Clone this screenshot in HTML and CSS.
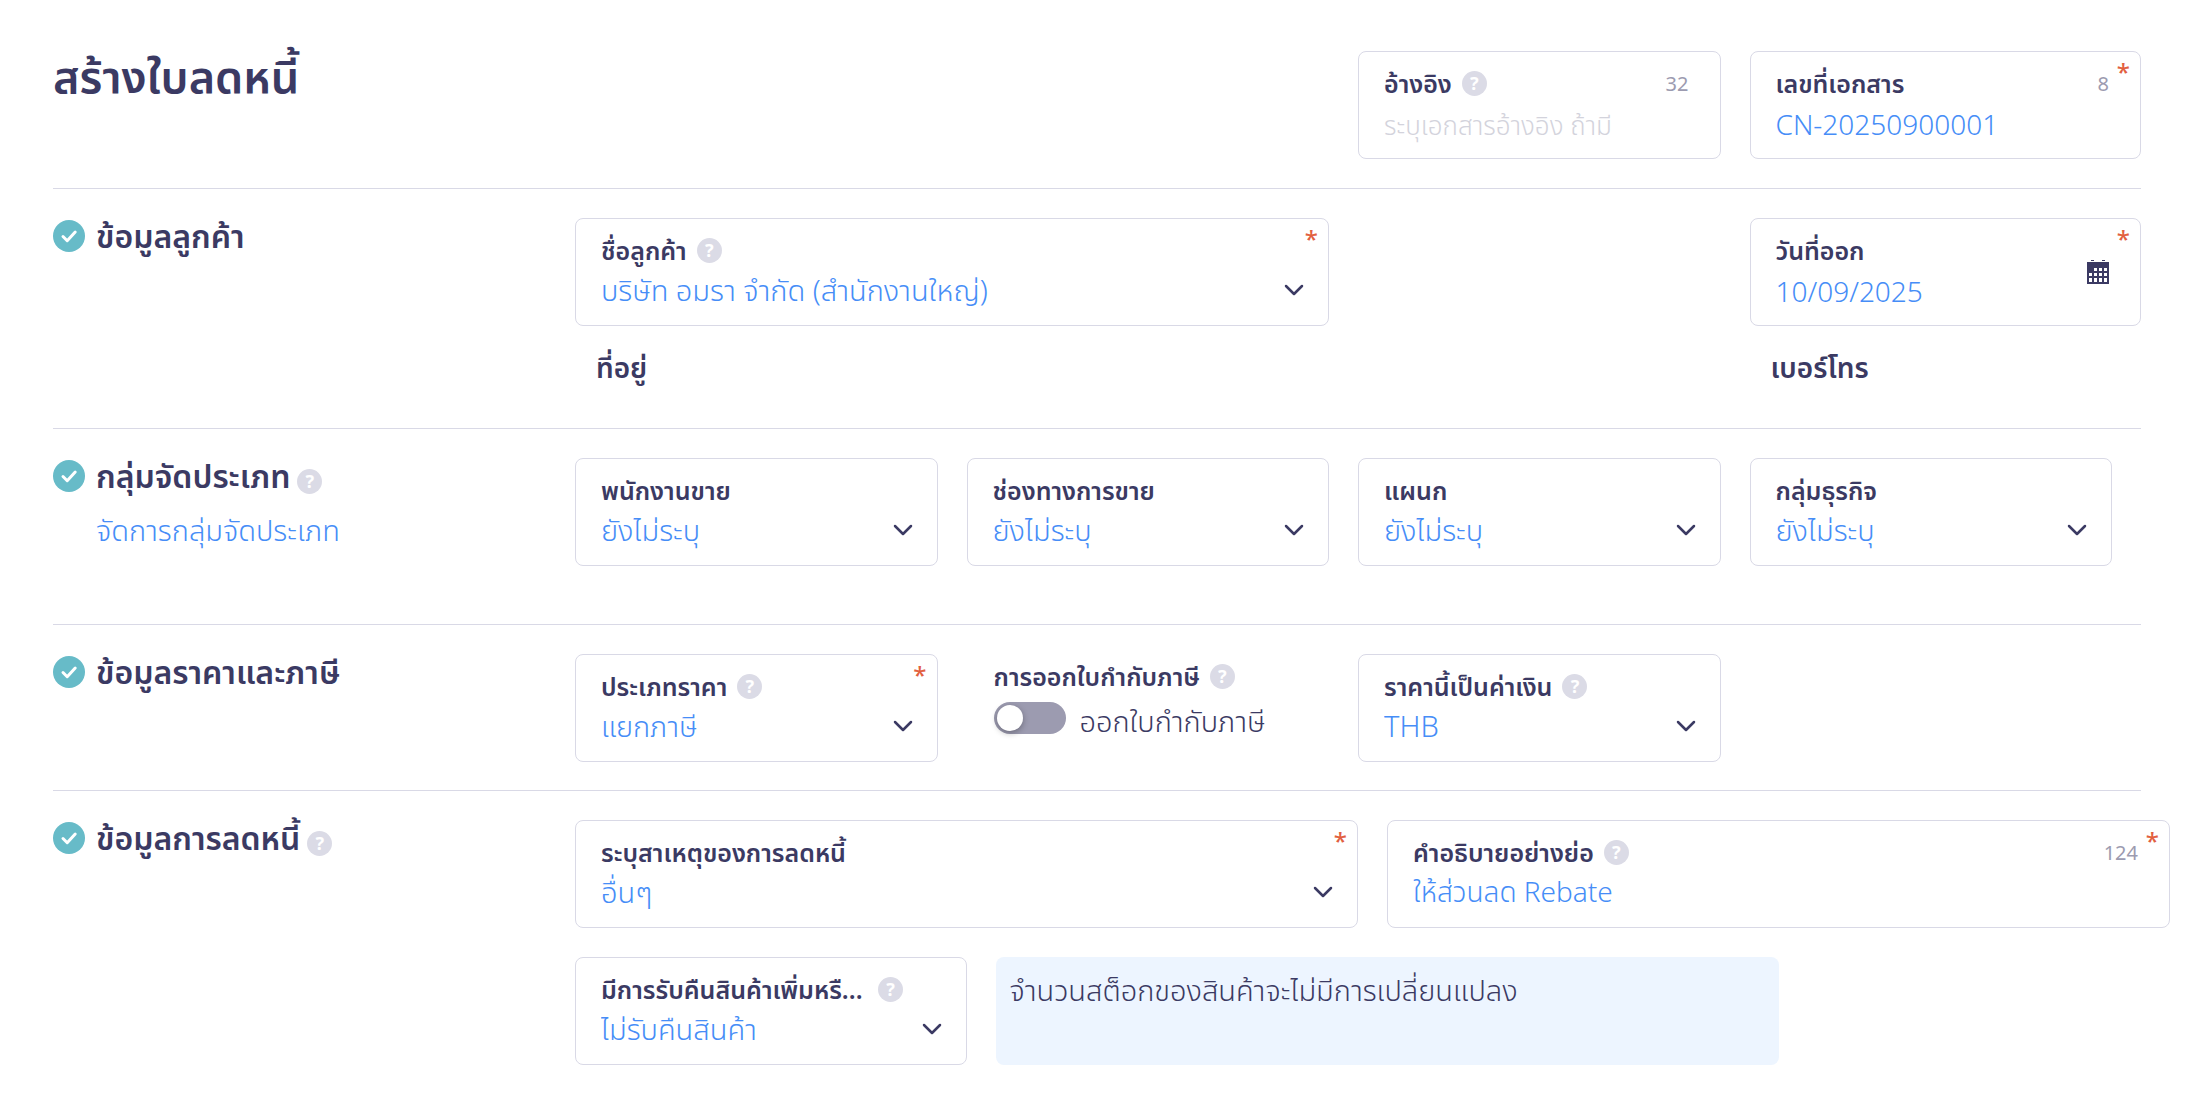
FILE: index.html
```html
<!DOCTYPE html>
<html lang="th">
<head>
    <meta charset="UTF-8">
    <meta name="viewport" content="width=device-width, initial-scale=1.0">
    <title>สร้างใบลดหนี้</title>
    <link rel="stylesheet" href="styles.css">
</head>
<body>

    <!-- Shared icons -->
    <svg class="sprite" aria-hidden="true">
        <symbol id="check" viewBox="0 0 32 32">
            <circle cx="16" cy="16" r="16" fill="#67bbc8"/>
            <path d="M10 16.5l4.2 4.2 8-8.6" fill="none" stroke="#fff" stroke-width="3" stroke-linecap="round" stroke-linejoin="round"/>
        </symbol>
        <symbol id="chevron" viewBox="0 0 20 12">
            <path d="M2 2l8 8 8-8" fill="none" stroke="#3b3a63" stroke-width="2.5" stroke-linecap="round" stroke-linejoin="round"/>
        </symbol>
        <symbol id="calendar" viewBox="0 0 22 24">
            <path d="M4 0h3v1H4zM15 0h3v1h-3zM0 2h22v22H0z" fill="#3b3a63"/>
            <path d="M7 8h3v3H7zM12 8h3v3h-3zM17 8h3v3h-3zM2 13h3v3H2zM7 13h3v3H7zM12 13h3v3h-3zM17 13h3v3h-3zM2 18h3v4H2zM7 18h3v4H7zM12 18h3v4h-3zM17 18h3v4h-3z" fill="#fff"/>
        </symbol>
    </svg>

    <form class="page">
        <header class="page-header">
            <h1>สร้างใบลดหนี้</h1>
            <div class="fields">
                <div class="field col-3">
                    <div class="field-top">
                        <label for="reference">อ้างอิง</label>
                        <button type="button" class="help">?</button>
                        <span class="counter">32</span>
                    </div>
                    <input type="text" id="reference" placeholder="ระบุเอกสารอ้างอิง ถ้ามี">
                </div>
                <div class="field last required">
                    <div class="field-top">
                        <label for="docNo">เลขที่เอกสาร</label>
                        <span class="counter">8</span>
                    </div>
                    <input type="text" id="docNo" value="CN-20250900001">
                </div>
            </div>
        </header>

        <section class="section customer">
            <div class="section-title">
                <svg class="check"><use href="#check"/></svg>
                <h2>ข้อมูลลูกค้า</h2>
            </div>
            <div class="fields">
                <div class="field wide required">
                    <div class="field-top">
                        <label for="customer">ชื่อลูกค้า</label>
                        <button type="button" class="help">?</button>
                    </div>
                    <select id="customer"><option>บริษัท อมรา จำกัด (สำนักงานใหญ่)</option></select>
                    <svg class="chevron"><use href="#chevron"/></svg>
                </div>
                <div class="field last required">
                    <div class="field-top">
                        <label for="issueDate">วันที่ออก</label>
                    </div>
                    <input type="text" id="issueDate" value="10/09/2025">
                    <svg class="calendar"><use href="#calendar"/></svg>
                </div>
                <h3 class="wide">ที่อยู่</h3>
                <h3 class="last">เบอร์โทร</h3>
            </div>
        </section>

        <section class="section groups">
            <div class="section-title">
                <svg class="check"><use href="#check"/></svg>
                <div>
                    <div class="title-row">
                        <h2>กลุ่มจัดประเภท</h2>
                        <button type="button" class="help">?</button>
                    </div>
                    <a href="#">จัดการกลุ่มจัดประเภท</a>
                </div>
            </div>
            <div class="fields">
                <div class="field">
                    <div class="field-top"><label for="sales">พนักงานขาย</label></div>
                    <select id="sales"><option>ยังไม่ระบุ</option></select>
                    <svg class="chevron"><use href="#chevron"/></svg>
                </div>
                <div class="field">
                    <div class="field-top"><label for="channel">ช่องทางการขาย</label></div>
                    <select id="channel"><option>ยังไม่ระบุ</option></select>
                    <svg class="chevron"><use href="#chevron"/></svg>
                </div>
                <div class="field">
                    <div class="field-top"><label for="department">แผนก</label></div>
                    <select id="department"><option>ยังไม่ระบุ</option></select>
                    <svg class="chevron"><use href="#chevron"/></svg>
                </div>
                <div class="field">
                    <div class="field-top"><label for="business">กลุ่มธุรกิจ</label></div>
                    <select id="business"><option>ยังไม่ระบุ</option></select>
                    <svg class="chevron"><use href="#chevron"/></svg>
                </div>
            </div>
        </section>

        <section class="section">
            <div class="section-title">
                <svg class="check"><use href="#check"/></svg>
                <h2>ข้อมูลราคาและภาษี</h2>
            </div>
            <div class="fields">
                <div class="field required">
                    <div class="field-top">
                        <label for="priceType">ประเภทราคา</label>
                        <button type="button" class="help">?</button>
                    </div>
                    <select id="priceType"><option>แยกภาษี</option></select>
                    <svg class="chevron"><use href="#chevron"/></svg>
                </div>
                <div class="tax-invoice">
                    <div class="field-top">
                        <span class="caption">การออกใบกำกับภาษี</span>
                        <button type="button" class="help">?</button>
                    </div>
                    <div class="toggle-row">
                        <input type="checkbox" class="toggle" id="taxInvoice">
                        <label for="taxInvoice">ออกใบกำกับภาษี</label>
                    </div>
                </div>
                <div class="field">
                    <div class="field-top">
                        <label for="currency">ราคานี้เป็นค่าเงิน</label>
                        <button type="button" class="help">?</button>
                    </div>
                    <select id="currency"><option>THB</option></select>
                    <svg class="chevron"><use href="#chevron"/></svg>
                </div>
            </div>
        </section>

        <section class="section">
            <div class="section-title">
                <svg class="check"><use href="#check"/></svg>
                <div class="title-row">
                    <h2>ข้อมูลการลดหนี้</h2>
                    <button type="button" class="help">?</button>
                </div>
            </div>
            <div class="fields bleed">
                <div class="field wide required">
                    <div class="field-top"><label for="reason">ระบุสาเหตุของการลดหนี้</label></div>
                    <select id="reason"><option>อื่นๆ</option></select>
                    <svg class="chevron"><use href="#chevron"/></svg>
                </div>
                <div class="field wide required">
                    <div class="field-top">
                        <label for="description">คำอธิบายอย่างย่อ</label>
                        <button type="button" class="help">?</button>
                        <span class="counter">124</span>
                    </div>
                    <input type="text" id="description" value="ให้ส่วนลด Rebate">
                </div>
                <div class="field">
                    <div class="field-top">
                        <label for="returns" class="long-label">มีการรับคืนสินค้าเพิ่มหรื...</label>
                        <button type="button" class="help">?</button>
                    </div>
                    <select id="returns"><option>ไม่รับคืนสินค้า</option></select>
                    <svg class="chevron"><use href="#chevron"/></svg>
                </div>
                <p class="notice">จำนวนสต็อกของสินค้าจะไม่มีการเปลี่ยนแปลง</p>
            </div>
        </section>
    </form>

</body>
</html>
```
FILE: styles.css
```css
* { box-sizing: border-box; }
body { font-family: 'Noto Sans', 'Noto Sans Thai', sans-serif; font-size: 29px; font-weight: 300; color: #3b3a63; background: #fff; margin: 0; }
h1, h2, h3, p { margin: 0; font-weight: 600; }
.sprite { display: none; }

.page { padding: 51px 53px; }
.page-header, .section { display: grid; grid-template-columns: 1fr 3fr; }
.page-header { padding-bottom: 29px; }
h1 { font-size: 45px; line-height: 50px; white-space: nowrap; }

.section { border-top: 1px solid #d9d9e6; padding: 29px 0 28px; }
.customer { min-height: 240px; }
.groups { min-height: 196px; }
.section-title { display: flex; align-items: flex-start; gap: 11px; }
.title-row { display: flex; gap: 7px; }
.title-row .help { margin-top: 11px; }
h2 { font-size: 32px; line-height: 36px; white-space: nowrap; }
h3 { font-size: 28px; line-height: 40px; padding: 8px 0 0 21px; }
.check { width: 32px; height: 32px; margin-top: 2px; flex: none; }
a { color: #468df7; text-decoration: none; display: block; line-height: 40px; margin-top: 16px; }

/* Four columns, the gutter is part of the column */
.fields { display: grid; grid-template-columns: repeat(4, 1fr); row-gap: 29px; align-items: start; }
.customer .fields { row-gap: 0; }
.fields > * { margin-right: 29px; }
.fields > .last { margin-right: 0; grid-column: 4; }
.fields > .col-3 { grid-column: 3; }
.fields > .wide { grid-column: span 2; }

/* Full-width columns with the gutter between them, so the row runs past the divider */
.bleed { margin-right: -29px; display: flex; flex-wrap: wrap; gap: 29px; }
.bleed > * { flex: none; width: calc((100% - 29px) / 4); margin-right: 0; }
.bleed > .wide, .bleed > .notice { width: calc((100% - 29px) / 2); }

.field { position: relative; height: 108px; border: 1px solid #d9d9e6; border-radius: 8px; padding: 16px 25px 0; }
.required::after { content: "*"; position: absolute; top: 2px; right: 10px; font-size: 24px; line-height: 36px; font-weight: 500; color: #e2603f; }
.field-top { display: flex; align-items: center; gap: 10px; height: 30px; }
.field-top label, .caption { font-size: 25px; line-height: 30px; font-weight: 600; white-space: nowrap; }
.field-top .long-label { min-width: 267px; }
.counter { margin-left: auto; padding-right: 6px; font-size: 20px; font-weight: 400; color: #9c9bb0; }
.help { width: 25px; height: 25px; border: 0; border-radius: 50%; padding: 0; background: #dbdbe6; color: #fff; font: 700 18px/25px 'Noto Sans', sans-serif; flex: none; }
.field input, .field select { appearance: none; display: block; width: 100%; height: 44px; margin: 4px 0 0; padding: 0; border: 0; outline: 0; background: none; font: inherit; color: #468df7; }
.field input { font-size: 28px; }
.field select { margin-top: 2px; }
.field input::placeholder { font-size: 26px; color: #d3d3dc; opacity: 1; }
.chevron { position: absolute; right: 24px; top: 65px; width: 20px; height: 12px; pointer-events: none; }
.calendar { position: absolute; right: 31px; top: 41px; width: 22px; height: 24px; }

.tax-invoice { padding: 7px 0 0 27px; }
.toggle-row { display: flex; align-items: flex-start; gap: 14px; margin-top: 11px; white-space: nowrap; }
.toggle-row label { line-height: 38px; }
.toggle { appearance: none; width: 72px; height: 32px; margin: 0; border-radius: 16px; background: #9c9bb0; flex: none; }
.toggle::before { content: ""; display: block; width: 26px; height: 26px; margin: 3px; border-radius: 50%; background: #fff; box-shadow: 0 2px 6px rgba(0, 0, 0, 0.3); }
.toggle:checked { background: #67bbc8; }

.notice { height: 108px; border-radius: 8px; background: #edf5ff; padding: 13px 14px; font-weight: 300; line-height: 40px; }
```
